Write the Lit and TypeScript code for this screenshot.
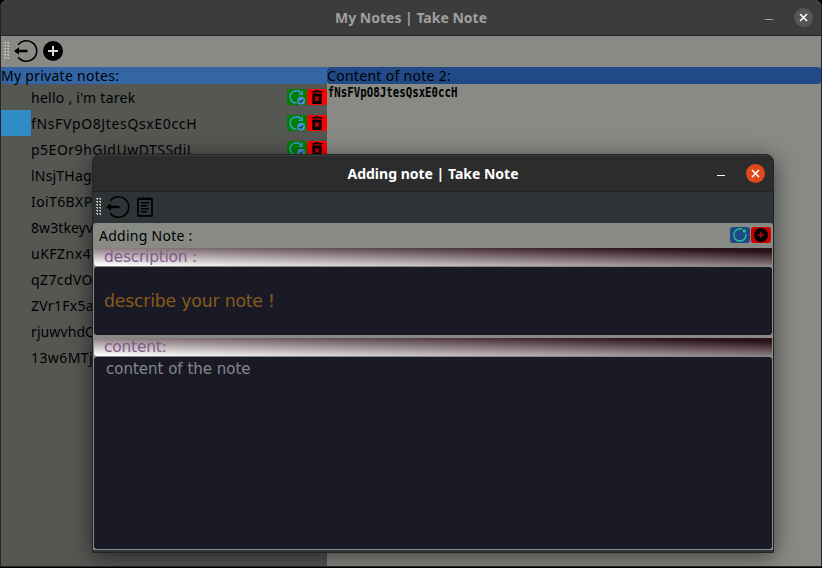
import { LitElement, html, css, svg } from "lit";
import { customElement, property } from "lit/decorators.js";

const exitIcon = html`<svg class="ico" width="24" height="24" viewBox="0 0 24 24" fill="none" stroke="#000">
  <path d="M4.2 5.8A10.3 10.3 0 1 1 4.2 18.2" stroke-width="1.6"/>
  <path d="M4 12H13.5" stroke-width="2.4"/><path d="M0 12L5 8.2V15.8Z" fill="#000" stroke="none"/></svg>`;
const plusIcon = html`<svg class="ico" width="20" height="20" viewBox="0 0 20 20">
  <circle cx="10" cy="10" r="10" fill="#000"/><path d="M10 5V15M5 10H15" stroke="#d8d8d6" stroke-width="2"/></svg>`;
const noteIcon = html`<svg class="ico note" width="16" height="20" viewBox="0 0 16 20" fill="none" stroke="#000">
  <path d="M1 2.2H15V18.8H1Z" stroke-width="1.7"/><path d="M3.5 0V3M6.5 0V3M9.5 0V3M12.5 0V3" stroke-width="1.4"/>
  <path d="M4 5.8H12M4 8.8H10.5M4 11.8H12M4 14.8H10" stroke-width="1.4"/></svg>`;
const syncIcon = html`<svg width="20" height="16" viewBox="0 0 20 16" fill="none" stroke="#3f97d8">
  <path d="M9.6 14A6.1 6.1 0 1 1 14.4 4.6" stroke-width="1.4"/><path d="M15.3 1.6V5.4H11.6" stroke-width="1.3"/>
  <circle cx="14.2" cy="11.7" r="3.9" fill="#4a90d9" stroke="none"/><path d="M12.2 11.7L13.7 13.1L16.2 10.4" stroke="#073f28" stroke-width="1.2"/></svg>`;
const trashIcon = html`<svg width="20" height="16" viewBox="0 0 20 16">
  <path d="M4.5 2H8V1H12V2H15.5V3.6H4.5Z M5.3 4.6H14.7V15H5.3Z" fill="#000"/><path d="M8 7.5L12 11.8M12 7.5L8 11.8" stroke="#e00" stroke-width="1.3"/></svg>`;
const reloadIcon = html`<svg width="20" height="16" viewBox="0 0 20 16" fill="none" stroke="#2bbd90">
  <path d="M15.9 7A6.1 6.1 0 1 1 12.2 2.3" stroke-width="1.4"/><circle cx="14.3" cy="4" r="1.5" fill="#2bd48a" stroke="none"/></svg>`;
const addIcon = html`<svg width="20" height="16" viewBox="0 0 20 16">
  <circle cx="10" cy="8" r="7" fill="#000"/><path d="M10 5V11M7 8H13" stroke="#c00" stroke-width="1.4"/></svg>`;

@customElement("window-title")
export class WindowTitle extends LitElement {
  @property() label = "";
  static styles = css`
    :host { display: grid; grid-template-columns: 1fr auto 1fr; align-items: center; box-sizing: border-box; }
    .text { grid-column: 2; font: bold 14px "Noto Sans", sans-serif; letter-spacing: 0; white-space: nowrap; }
    .controls { display: flex; justify-content: flex-end; align-items: center; gap: 20px; padding: 0 8px 1px 0; }
    .min { width: 8px; height: 1px; margin: 4px 1px 0 0; background: currentColor; }
    .close { display: block; width: 19px; height: 19px; border-radius: 50%; background: var(--close, #555); }
  `;
  render() {
    return html`<span class="text">${this.label}</span>
      <div class="controls"><i class="min"></i>
        <svg class="close" viewBox="0 0 19 19"><path d="M6 6L13 13M13 6L6 13" stroke="#fff" stroke-width="1.6"/></svg></div>`;
  }
}

@customElement("drag-handle")
export class DragHandle extends LitElement {
  static styles = css`:host { display: block; width: 6px; height: 18px; } svg { display: block; }`;
  render() {
    const dots = [0, 1, 2, 3, 4, 5].flatMap((r) => [0, 1].map((c) =>
      svg`<path d="M${c * 3} ${r * 3}h2v2h-1v-1h-1z" fill="#bcbeba"/>`));
    return html`<svg width="6" height="18">${dots}</svg>`;
  }
}

@customElement("app-root")
export class AppRoot extends LitElement {
  // Each note's name with its tracking in pixels.
  notes: [string, number][] = [
    ["hello , i'm tarek", 0.25], ["fNsFVpO8JtesQsxE0ccH", 0.64], ["p5EOr9hGJdUwDTSSdiL", 0.5],
    ["lNsjTHagK", 0.2], ["IoiT6BXPw", 0.4], ["8w3tkeyvR", 0.1], ["uKFZnx4Tb", 0.5],
    ["qZ7cdVOm", 0.4], ["ZVr1Fx5aq", 0.3], ["rjuwvhdQe", 0.1], ["13w6MTjx", 0.4],
  ];
  static styles = css`
    :host { display: block; position: relative; width: 822px; height: 568px; overflow: hidden; background: #000; font: 14px/17px "Noto Sans", sans-serif; letter-spacing: 0.27px; color: #000; }
    * { box-sizing: border-box; }
    svg { display: block; }
    .main { height: 567px; border: solid #242424; border-width: 0 1px 1px; border-radius: 7px 7px 0 0; background: #888a85; overflow: hidden; display: flex; flex-direction: column; }
    .main > window-title { height: 36px; flex: none; background: #3c3c3c; border-bottom: 1px solid #262626; color: #a0a0a0; }
    .tools { height: 31px; flex: none; display: flex; align-items: center; padding: 0 0 1px 3px; }
    .tools .ico:nth-of-type(1) { margin: 0 5px 0 4px; }
    .tools .note { margin-left: 2px; }
    .split { flex: 1; display: grid; grid-template-columns: 326px 1fr; min-height: 0; }
    .left { background: #555753; }
    .head { height: 17px; border-radius: 3px; white-space: nowrap; }
    .left .head { background: #3465a4; }
    .right .head { background: #204a87; letter-spacing: 0.3px; }
    .row { height: 26px; display: grid; grid-template-columns: 30px 1fr 20px 20px; align-items: center; white-space: nowrap; }
    .row .mark { height: 26px; }
    .row.sel .mark { background: #308cc6; }
    .btn { width: 20px; height: 16px; border-radius: 3px; }
    .green { background: #008000; }
    .red { background: #f00; }
    .crimson { background: #c00; }
    .blue { background: #204a87; }
    .body { font: bold 14px/17px "DejaVu Sans Mono", monospace; letter-spacing: 0; transform-origin: left; transform: scaleX(.77); white-space: nowrap; padding-left: 1px; }
    .dialog { position: absolute; left: 92px; top: 154px; width: 682px; height: 399px; border: 1px solid #242626; border-radius: 8px 8px 0 0; background: #2e3436; box-shadow: 0 4px 22px rgba(0,0,0,.55); overflow: hidden; display: flex; flex-direction: column; }
    .dialog window-title { --close: #e0491a; height: 37px; flex: none; background: #2c2c2c; border-top: 1px solid #3c3c3c; border-bottom: 1px solid #232323; color: #fff; }
    .form { height: 327px; background: #888a85; border-radius: 3px 3px 0 0; padding: 0 1px; display: flex; flex-direction: column; }
    .bar { height: 25px; display: flex; align-items: center; gap: 1px; padding: 0 1px 1px 5px; flex: none; }
    .bar span { flex: 1; padding-top: 1px; }
    .cap { height: 18px; flex: none; margin-bottom: 1px; border-radius: 0 0 3px 3px; padding-left: 10px; font: 15.5px/18px "DejaVu Sans", sans-serif; letter-spacing: -0.25px; color: #835a8c; background: linear-gradient(to bottom left, #2b1118 10%, #fff 97%); }
    .field { background: #1a1a27; border-radius: 3px; font-family: "DejaVu Sans", sans-serif; letter-spacing: 0; }
    .desc { height: 68px; flex: none; padding-left: 10px; font-size: 17.3px; letter-spacing: -0.2px; line-height: 68px; color: #875b18; margin-bottom: 3px; }
    .content { height: 192px; padding: 4px 12px; font-size: 15px; color: #85868a; }
  `;
  render() {
    return html`
      <div class="main">
        <window-title label="My Notes | Take Note"></window-title>
        <div class="tools"><drag-handle></drag-handle>${exitIcon}${plusIcon}</div>
        <div class="split">
          <div class="left">
            <div class="head">My private notes:</div>
            ${this.notes.map(([name, tracking], i) => html`<div class="row ${i === 1 ? "sel" : ""}"><i class="mark"></i><span style="letter-spacing:${tracking}px">${name}</span>
              <span class="btn green">${syncIcon}</span><span class="btn red">${trashIcon}</span></div>`)}
          </div>
          <div class="right"><div class="head">Content of note 2:</div><div class="body">fNsFVpO8JtesQsxE0ccH</div></div>
        </div>
      </div>
      <div class="dialog">
        <window-title label="Adding note | Take Note"></window-title>
        <div class="tools"><drag-handle></drag-handle>${exitIcon}${noteIcon}</div>
        <div class="form">
          <div class="bar"><span>Adding Note :</span><i class="btn blue">${reloadIcon}</i><i class="btn crimson">${addIcon}</i></div>
          <div class="cap">description :</div>
          <div class="field desc">describe your note !</div>
          <div class="cap">content:</div>
          <div class="field content">content of the note</div>
        </div>
      </div>`;
  }
}
